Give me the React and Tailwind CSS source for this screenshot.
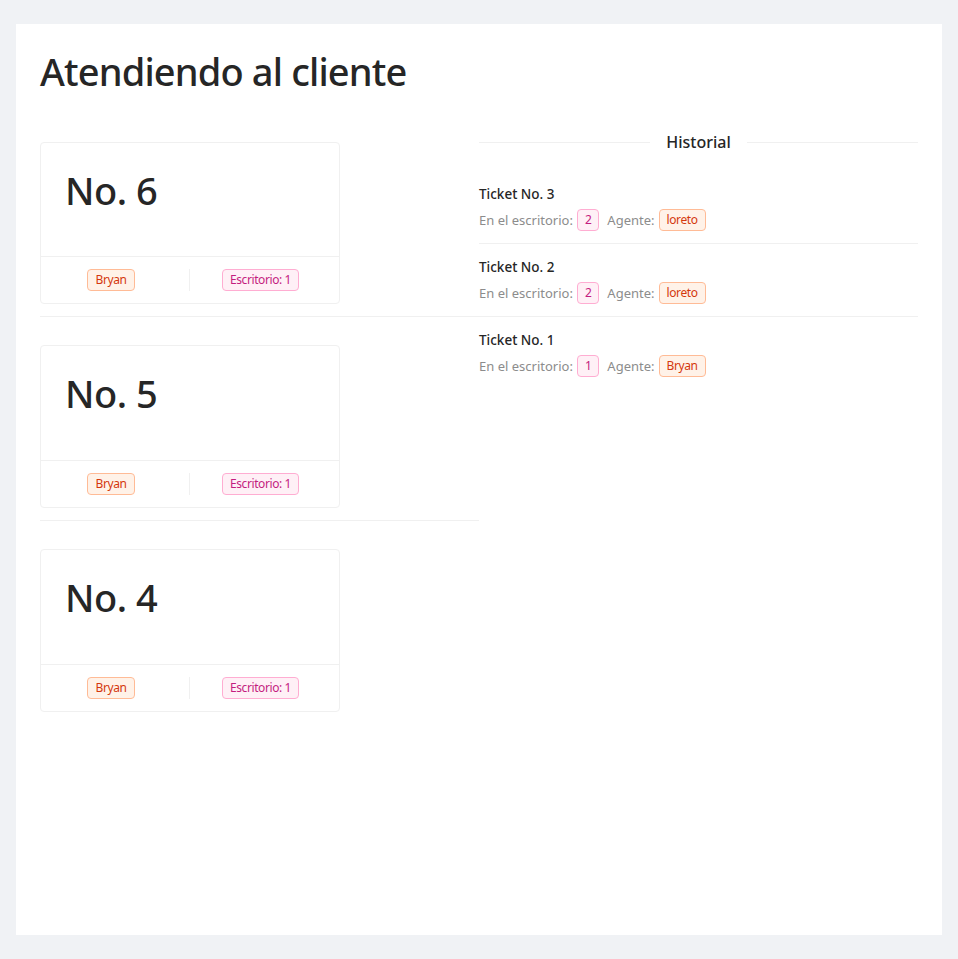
// Pantalla "Atendiendo al cliente": tickets actuales a la izquierda, historial a la derecha.
const current = [
  { ticket: 6, agent: 'Bryan', desk: 1 },
  { ticket: 5, agent: 'Bryan', desk: 1 },
  { ticket: 4, agent: 'Bryan', desk: 1 },
]

const history = [
  { ticket: 3, desk: 2, agent: 'loreto' },
  { ticket: 2, desk: 2, agent: 'loreto' },
  { ticket: 1, desk: 1, agent: 'Bryan' },
]

export default function App() {
  return (
    <div
      className="min-h-screen bg-[#f0f2f5] px-4 py-6 text-sm text-[#262626]"
      style={{ fontFamily: '"Noto Sans", "Open Sans", Arial, sans-serif' }}
    >
      <div className="min-h-[911px] bg-white p-6">
        <h1 className="mb-[19px] text-[38px] font-medium leading-[46.74px] tracking-[-0.85px] text-[#262626]">
          Atendiendo al cliente
        </h1>

        <div className="flex">
          <div className="w-1/2">
            {current.map((item, i) => (
              <div
                key={item.ticket}
                className={`py-3 ${i < current.length - 1 ? 'border-b border-[#f0f0f0]' : ''}`}
              >
                <div className="mt-4 w-[300px] rounded-sm border border-[#f0f0f0] bg-white">
                  <div className="p-6">
                    <div className="mb-[19px] text-[38px] font-medium leading-[46.74px] tracking-[-0.5px] text-[#262626]">
                      No. {item.ticket}
                    </div>
                  </div>
                  <ul className="flex border-t border-[#f0f0f0]">
                    <li className="my-3 flex h-[22px] w-1/2 items-start justify-center border-r border-[#f0f0f0]">
                      <Tag color="volcano" className="mr-2">{item.agent}</Tag>
                    </li>
                    <li className="my-3 flex h-[22px] w-1/2 items-start justify-center">
                      <Tag color="magenta" className="mr-2">Escritorio: {item.desk}</Tag>
                    </li>
                  </ul>
                </div>
              </div>
            ))}
          </div>

          <div className="w-1/2">
            <div className="my-4 flex items-center">
              <div className="h-px flex-1 bg-[#f0f0f0]" />
              <span className="px-4 text-base font-medium leading-[25px] text-[#262626]">Historial</span>
              <div className="h-px flex-1 bg-[#f0f0f0]" />
            </div>

            {history.map((h, i) => (
              <div
                key={h.ticket}
                className={`py-3 ${i < history.length - 1 ? 'border-b border-[#f0f0f0]' : ''}`}
              >
                <div className="mb-1 text-[13.5px] font-medium leading-[22px] text-[#262626]">
                  Ticket No. {h.ticket}
                </div>
                <div className="flex items-center text-[13px] leading-[22px] text-[#8c8c8c]">
                  <span className="mr-1">En el escritorio:</span>
                  <Tag color="magenta" className="mr-2">{h.desk}</Tag>
                  <span className="mr-1">Agente:</span>
                  <Tag color="volcano">{h.agent}</Tag>
                </div>
              </div>
            ))}
          </div>
        </div>
      </div>
    </div>
  )
}

function Tag({ color, className = '', children }) {
  const tone =
    color === 'volcano'
      ? 'border-[#ffbb96] bg-[#fff2e8] text-[#d4380d]'
      : 'border-[#ffadd2] bg-[#fff0f6] text-[#c41d7f]'
  return (
    <span
      className={`inline-block rounded-sm border px-[7px] text-xs leading-5 tracking-[-0.4px] ${tone} ${className}`}
    >
      {children}
    </span>
  )
}
